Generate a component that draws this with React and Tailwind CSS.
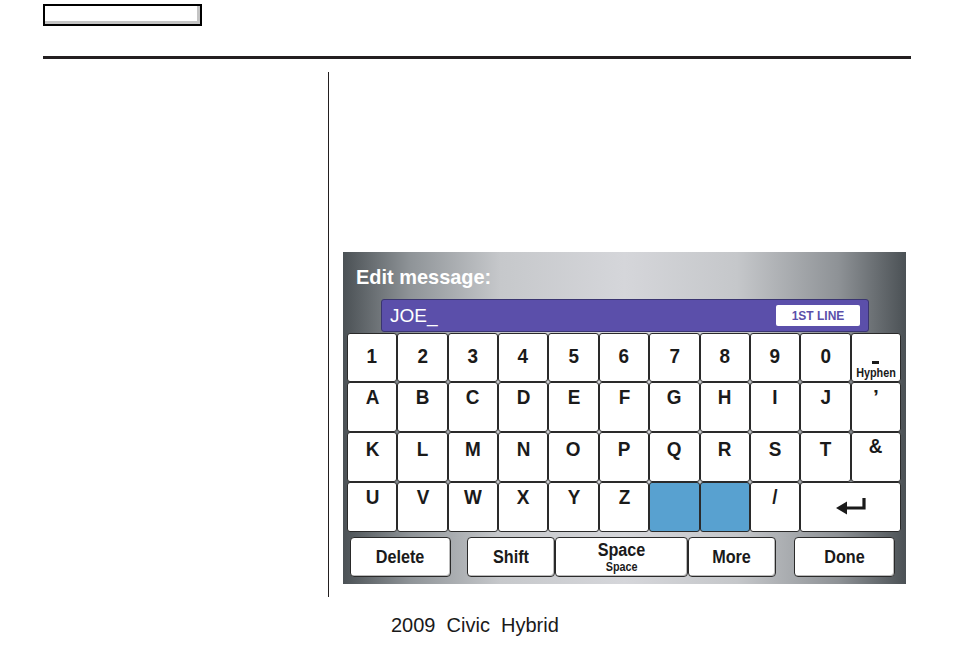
import React from "react";

const F = { fontFamily: '"Liberation Sans", Arial, sans-serif' };

function Key({ children, blue, span, pt = "pt-[12px]" }) {
  return (
    <div
      className={`${span ? "col-span-2" : ""} ${blue ? "bg-[#58a1d0]" : "bg-white"} border border-[#2a2a2a] rounded-[3px] flex flex-col items-center ${pt} text-[21px] font-bold text-[#1a1a1a] leading-none`}
    >
      {children}
    </div>
  );
}

function L({ children }) {
  return <span className="inline-block scale-x-[0.9]">{children}</span>;
}

function Btn({ w, ml = "", children }) {
  return (
    <div
      className={`${w} ${ml} h-[40px] bg-white border border-[#2a2a2a] rounded-[4px] shadow-[inset_-1px_-1px_0_#bbb] flex flex-col items-center justify-center text-[18px] font-bold text-[#1a1a1a] leading-none`}
    >
      {children}
    </div>
  );
}

export default function App() {
  const row2 = ["A", "B", "C", "D", "E", "F", "G", "H", "I", "J"];
  const row3 = ["K", "L", "M", "N", "O", "P", "Q", "R", "S", "T"];
  const row4 = ["U", "V", "W", "X", "Y", "Z"];
  return (
    <div className="w-[954px] h-[652px] bg-white relative overflow-hidden" style={F}>
      <div className="pt-[4px] pl-[43px]">
        <div className="w-[159px] h-[22px] border-2 border-black shadow-[inset_-3px_-3px_0_#c4c4c4]" />
      </div>
      <div className="mt-[30px] ml-[43px] w-[868px] h-[3px] bg-[#231f20]" />
      <div className="flex mt-[13px]">
        <div className="w-[329px] h-[525px] border-r border-[#231f20]" />
        <div className="pl-[14px] pt-[180px]">
          <div
            className="w-[563px] h-[332px] relative bg-[linear-gradient(to_right,#4b5155_0%,#8f9498_12%,#c6c8cb_28%,#d5d6da_50%,#c5c7ca_70%,#8e9296_88%,#4b5155_100%)]"
          >
            <div className="pt-[12px] pl-[13px] text-white font-bold text-[21px] leading-[26px]">
              <span className="inline-block origin-left scale-x-[0.95]">Edit message:</span>
            </div>
            <div className="mt-[9px] ml-[38px] w-[488px] h-[33px] bg-[#5b4faa] border border-[#3a3570] rounded-[3px] flex items-center justify-between pl-[8px] pr-[8px]">
              <span className="text-white text-[19px] leading-none">JOE_</span>
              <span className="w-[84px] h-[21px] bg-white rounded-[2px] flex items-center justify-center text-[#5b4faa] font-bold text-[12px]">
                1ST LINE
              </span>
            </div>
            <div className="ml-[4px] mt-[1px] w-[554px] grid grid-cols-11 grid-rows-[49px_50px_50px_50px]">
              {["1", "2", "3", "4", "5", "6", "7", "8", "9", "0"].map((k) => (
                <Key key={k} pt="pt-[11px]"><L>{k}</L></Key>
              ))}
              <Key pt="pt-[0px]">
                <span className="mt-[27px] w-[7px] h-[3px] bg-[#1a1a1a]" />
                <span className="text-[12px] leading-[12px] mt-[3px] inline-block scale-x-[0.9]">Hyphen</span>
              </Key>
              {row2.map((k) => (
                <Key key={k} pt="pt-[3px]"><L>{k}</L></Key>
              ))}
              <Key pt="pt-[3px]">’</Key>
              {row3.map((k) => (
                <Key key={k} pt="pt-[5px]"><L>{k}</L></Key>
              ))}
              <Key pt="pt-[2px]"><L>&amp;</L></Key>
              {row4.map((k) => (
                <Key key={k} pt="pt-[3px]"><L>{k}</L></Key>
              ))}
              <Key blue />
              <Key blue />
              <Key pt="pt-[3px]"><L>/</L></Key>
              <Key span pt="pt-[14px]">
                <svg width="32" height="18" viewBox="0 0 32 18">
                  <path d="M29 1 V11 H10" fill="none" stroke="#1a1a1a" strokeWidth="3.2" />
                  <path d="M1 11 L12 4.5 L12 17.5 Z" fill="#1a1a1a" />
                </svg>
              </Key>
            </div>
            <div className="flex mt-[5px] ml-[7px]">
              <Btn w="w-[101px]"><L>Delete</L></Btn>
              <Btn w="w-[88px]" ml="ml-[16px]"><L>Shift</L></Btn>
              <Btn w="w-[133px]">
                <L>Space</L>
                <span className="text-[12px] mt-[2px] inline-block scale-x-[0.9]">Space</span>
              </Btn>
              <Btn w="w-[88px]"><L>More</L></Btn>
              <Btn w="w-[101px]" ml="ml-[18px]"><L>Done</L></Btn>
            </div>
          </div>
        </div>
      </div>
      <div className="ml-[391px] mt-[16px] text-[20px] leading-[24px] text-[#1a1a1a] whitespace-pre">
        2009  Civic  Hybrid
      </div>
    </div>
  );
}
